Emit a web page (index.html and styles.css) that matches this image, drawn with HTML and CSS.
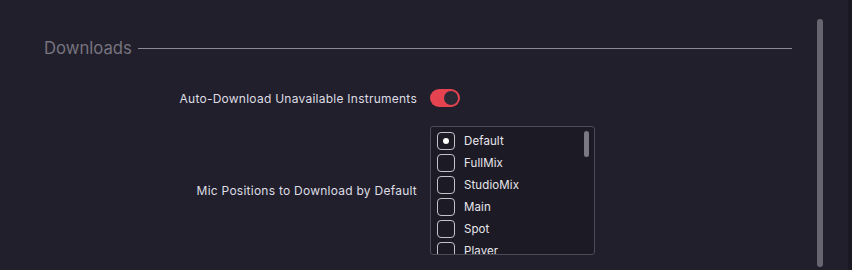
FILE: index.html
```html
<!DOCTYPE html>
<html>
<head>
<meta charset="utf-8">
<link rel="stylesheet" href="styles.css">
</head>
<body>
<div class="page">
  <div class="content">
    <div class="section-head">
      <span class="section-title">Downloads</span>
      <span class="section-line"></span>
    </div>
    <div class="settings">
      <div class="label">Auto-Download Unavailable Instruments</div>
      <div class="control">
        <div class="toggle on"><span class="knob"></span></div>
      </div>
      <div class="label">Mic Positions to Download by Default</div>
      <div class="control">
        <div class="listbox">
          <div class="list-item"><span class="check checked"><span class="dot"></span></span><span class="item-text">Default</span></div>
          <div class="list-item"><span class="check"></span><span class="item-text">FullMix</span></div>
          <div class="list-item"><span class="check"></span><span class="item-text">StudioMix</span></div>
          <div class="list-item"><span class="check"></span><span class="item-text">Main</span></div>
          <div class="list-item"><span class="check"></span><span class="item-text">Spot</span></div>
          <div class="list-item"><span class="check"></span><span class="item-text">Player</span></div>
          <div class="list-thumb"></div>
        </div>
      </div>
    </div>
  </div>
  <div class="vscroll"><div class="vthumb"></div></div>
  <div class="edge"></div>
</div>
</body>
</html>
```
FILE: styles.css
```css
* { box-sizing: border-box; }
html, body {
  margin: 0;
  padding: 0;
  background: #211f2b;
  font-family: Inter, "Noto Sans", sans-serif;
}
.page {
  display: flex;
  height: 270px;
  overflow: hidden;
}
.content {
  width: 748px;
  margin-left: 44px;
  padding-top: 38px;
}
.section-head {
  display: flex;
  align-items: center;
  gap: 6px;
  height: 20px;
}
.section-title {
  font-size: 16.7px;
  color: #77747f;
  line-height: 20px;
}
.section-line {
  flex: 1;
  height: 1px;
  background: #8b8995;
}
.settings {
  display: grid;
  grid-template-columns: 373px 1fr;
  column-gap: 13px;
  row-gap: 19px;
  margin-top: 31px;
  align-items: center;
}
.label {
  text-align: right;
  font-size: 12px;
  color: #dedde4;
  letter-spacing: 0.25px;
}
.control {
  display: flex;
}
.toggle {
  width: 30px;
  height: 18px;
  border-radius: 9px;
  background: #e5434f;
  display: flex;
  align-items: center;
  justify-content: flex-end;
  padding: 0 2px;
}
.knob {
  width: 14px;
  height: 14px;
  border-radius: 50%;
  background: #2b2935;
}
.listbox {
  position: relative;
  width: 165px;
  height: 129px;
  border: 1px solid #4d4b57;
  border-radius: 3px;
  background: #1c1a25;
  padding: 3px 0 0 6px;
  overflow: hidden;
}
.list-item {
  display: flex;
  align-items: center;
  gap: 9px;
  height: 22px;
}
.check {
  width: 18px;
  height: 18px;
  border: 1px solid #c4c2ca;
  border-radius: 4px;
  display: flex;
  align-items: center;
  justify-content: center;
  flex: none;
}
.dot {
  width: 6px;
  height: 6px;
  border-radius: 50%;
  background: #ffffff;
}
.item-text {
  font-size: 11.5px;
  letter-spacing: 0.1px;
  color: #e8e7ec;
}
.list-thumb {
  position: absolute;
  left: 153px;
  top: 4px;
  width: 5px;
  height: 26px;
  border-radius: 3px;
  background: #7a7883;
}
.vscroll {
  margin-left: 25px;
  padding-top: 19px;
  width: 6px;
}
.vthumb {
  width: 6px;
  height: 248px;
  border-radius: 3px;
  background: #67656f;
}
.edge {
  margin-left: 25px;
  width: 4px;
  background: #1a1822;
}
```
